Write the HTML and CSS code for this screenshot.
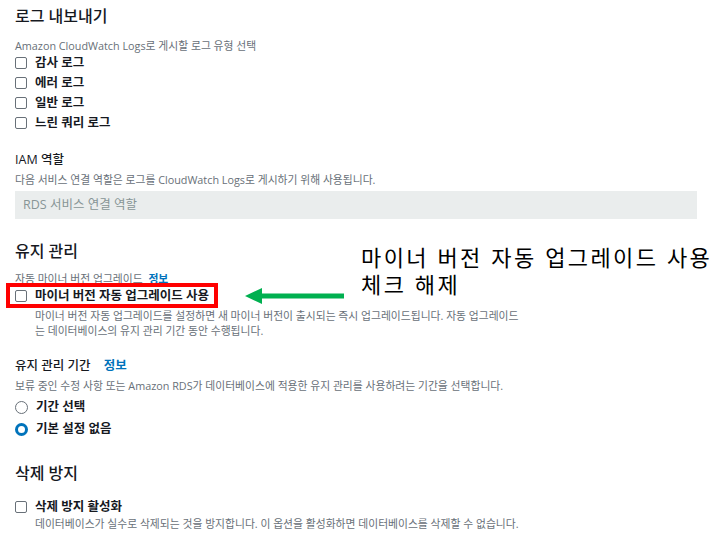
FILE: index.html
```html
<!doctype html>
<html lang="ko">
  <head>
    <meta charset="utf-8" />
    <title>로그 내보내기</title>
    <link rel="stylesheet" href="styles.css">
  </head>

  <body>
    <div class="page">
      <section class="group">
        <h2>로그 내보내기</h2>
        <p class="desc first">Amazon CloudWatch Logs로 게시할 로그 유형 선택</p>
        <div class="checks">
          <label class="check"><span class="box"></span>감사 로그</label>
          <label class="check"><span class="box"></span>에러 로그</label>
          <label class="check"><span class="box"></span>일반 로그</label>
          <label class="check"><span class="box"></span>느린 쿼리 로그</label>
        </div>
      </section>

      <section class="field iam">
        <div class="field-label">IAM 역할</div>
        <p class="desc">다음 서비스 연결 역할은 로그를 CloudWatch Logs로 게시하기 위해 사용됩니다.</p>
        <div class="input">RDS 서비스 연결 역할</div>
      </section>

      <section class="group maint">
        <h2>유지 관리</h2>
        <p class="desc">자동 마이너 버전 업그레이드 <a class="info">정보</a></p>
        <div class="highlight-row">
          <div class="highlight">
            <label class="check"><span class="box"></span>마이너 버전 자동 업그레이드 사용</label>
          </div>
          <svg class="arrow" width="100" height="16" viewBox="0 0 100 16">
            <polygon points="0,8 17,0 17,5.5 99,5.5 99,10.5 17,10.5 17,16" fill="#00b050" />
          </svg>
        </div>
        <p class="desc indent">마이너 버전 자동 업그레이드를 설정하면 새 마이너 버전이 출시되는 즉시 업그레이드됩니다. 자동 업그레이드<br>는 데이터베이스의 유지 관리 기간 동안 수행됩니다.</p>

        <div class="note">마이너 버전 자동 업그레이드 사용<br>체크 해제</div>
      </section>

      <section class="field window">
        <div class="field-label">유지 관리 기간 <a class="info">정보</a></div>
        <p class="desc">보류 중인 수정 사항 또는 Amazon RDS가 데이터베이스에 적용한 유지 관리를 사용하려는 기간을 선택합니다.</p>
        <div class="radios">
          <label class="check"><span class="radio"></span>기간 선택</label>
          <label class="check"><span class="radio on"></span>기본 설정 없음</label>
        </div>
      </section>

      <section class="group protect">
        <h2>삭제 방지</h2>
        <label class="check"><span class="box"></span>삭제 방지 활성화</label>
        <p class="desc indent">데이터베이스가 실수로 삭제되는 것을 방지합니다. 이 옵션을 활성화하면 데이터베이스를 삭제할 수 없습니다.</p>
      </section>
    </div>
  </body>
</html>
```

FILE: styles.css
```css
body {
  margin: 0;
  background-color: #fff;
  color: #16191f;
  font-family: "Open Sans", "Noto Sans CJK KR", sans-serif;
}

.page {
  position: relative;
  padding: 4px 14px 0 15px;
}

h2 {
  margin: 0;
  font-size: 16px;
  font-weight: 500;
  line-height: 24px;
}

.desc {
  margin: 0;
  font-size: 10.8px;
  line-height: 15px;
  color: #687078;
}

.desc.first {
  margin-top: 10px;
}

.indent {
  padding-left: 20px;
}

.checks {
  display: flex;
  flex-direction: column;
}

.check {
  display: flex;
  align-items: center;
  gap: 8px;
  font-size: 12.5px;
  font-weight: 700;
  line-height: 20px;
}

.box {
  width: 10px;
  height: 10px;
  border: 1px solid #687078;
  border-radius: 2px;
}

.radio {
  width: 11px;
  height: 11px;
  border: 1px solid #687078;
  border-radius: 50%;
}

.radio.on {
  width: 7px;
  height: 7px;
  border: 3px solid #0073bb;
}

.info {
  color: #0073bb;
  font-weight: 700;
  margin-left: 3px;
}

.field {
  margin-top: 17px;
}

.field-label {
  font-size: 12.5px;
  font-weight: 500;
  line-height: 20px;
}

.iam .desc {
  margin-top: 2px;
}

.input {
  margin-top: 4px;
  height: 28px;
  line-height: 28px;
  padding-left: 8px;
  background-color: #eaeded;
  font-size: 12.5px;
  color: #879596;
}

.maint {
  margin-top: 20px;
  position: relative;
}

.maint .desc {
  margin-top: 8px;
}

.maint .desc.indent {
  margin-top: 0;
}

.highlight-row {
  display: flex;
  align-items: center;
  gap: 27px;
  margin-top: -3px;
}

.highlight {
  margin-left: -9px;
  padding: 0 5px 0 5px;
  border: 4px solid #ff0000;
}

.highlight .check {
  line-height: 17px;
}

.note {
  position: absolute;
  left: 346px;
  top: 4px;
  white-space: nowrap;
  font-family: "Noto Sans CJK KR", sans-serif;
  font-size: 22px;
  letter-spacing: 2.4px;
  line-height: 27px;
  color: #000;
}

.window {
  margin-top: 18px;
}

.window .desc {
  margin-top: 2px;
}

.window .field-label .info {
  margin-left: 10px;
}

.radios {
  display: flex;
  flex-direction: column;
  margin-top: 3px;
}

.window .check {
  line-height: 22px;
}

.protect {
  margin-top: 21px;
}

.protect .check {
  margin-top: 13px;
  line-height: 18px;
}
```
